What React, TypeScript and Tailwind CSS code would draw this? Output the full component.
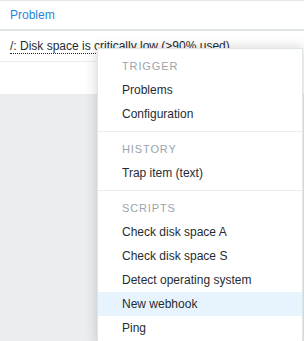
import React from "react";

type Section = { title: string; items: string[] };

const sections: Section[] = [
  { title: "Trigger", items: ["Problems", "Configuration"] },
  { title: "History", items: ["Trap item (text)"] },
  {
    title: "Scripts",
    items: ["Check disk space A", "Check disk space S", "Detect operating system", "New webhook", "Ping"],
  },
];

function PopupMenu() {
  return (
    <div className="absolute left-[97px] top-[48px] w-[206px] bg-white border border-[#dfe4e7] shadow-[0_0_12px_rgba(0,0,0,0.18)]">
      {sections.map((s, i) => (
        <div key={s.title} className={`py-[5px] ${i > 0 ? "border-t border-[#ebeef0]" : ""}`}>
          <div className="h-6 flex items-center pl-6 text-[11px] uppercase tracking-[0.08em] text-[#9aa4ac]">
            {s.title}
          </div>
          {s.items.map((item) => (
            <div
              key={item}
              className={`h-6 flex items-center pl-6 text-[12px] text-[#1f2c33] ${
                item === "New webhook" ? "bg-[#e8f4fd]" : ""
              }`}
            >
              {item}
            </div>
          ))}
        </div>
      ))}
    </div>
  );
}

export default function App() {
  return (
    <div className="relative w-[304px] h-[341px] overflow-hidden bg-[#ebeef0] font-['Liberation_Sans',Arial,sans-serif]">
      <div className="bg-white border-t border-[#e3e7ea]">
        <div className="h-[30px] flex items-center px-[10px] text-[12px] text-[#1f87d9] border-b-2 border-[#dfe4e7]">
          Problem
        </div>
        <div className="h-[31px] flex items-center px-[10px] border-b border-[#ebeef0] text-[12px] text-[#1f2c33]">
          <span className="border-b border-dotted border-[#1f2c33] leading-[14px] whitespace-nowrap">
            /: Disk space is critically low (&gt;90% used)
          </span>
        </div>
        <div className="h-[32px]" />
      </div>
      <PopupMenu />
    </div>
  );
}
